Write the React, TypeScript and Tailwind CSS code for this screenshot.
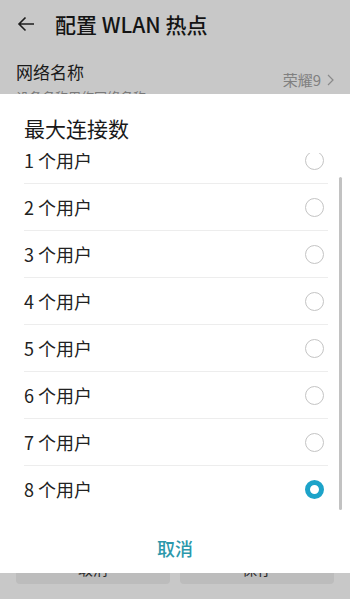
import React from 'react';

const OPTIONS = [1, 2, 3, 4, 5, 6, 7, 8];
const SELECTED = 8;

const Radio: React.FC<{ checked: boolean }> = ({ checked }) =>
  checked ? (
    <span className="w-[19px] h-[19px] rounded-full border-[5px] border-[#1ca3c9] box-border" />
  ) : (
    <span className="w-[19px] h-[19px] rounded-full border border-[#c4c4c4] box-border" />
  );

export default function App() {
  return (
    <div
      className="relative w-[350px] h-[599px] overflow-hidden bg-[#c8c8c8] flex flex-col"
      style={{ fontFamily: '"Noto Sans CJK SC", "Noto Sans", sans-serif' }}
    >
      {/* Background page (dimmed) */}
      <div className="flex items-center h-[48px] pl-[16px]">
        <svg width="20" height="20" viewBox="0 0 20 20" className="text-[#1c1c1c]">
          <path d="M18 10H3M9.5 3.5L3 10l6.5 6.5" fill="none" stroke="currentColor" strokeWidth="1.6" />
        </svg>
        <span className="ml-[19px] text-[21px] font-medium text-[#141414] leading-none">配置 WLAN 热点</span>
      </div>
      <div className="flex items-start justify-between px-[16px] pt-[11px]">
        <div className="flex flex-col">
          <span className="text-[17px] text-[#1a1a1a] leading-[26px]">网络名称</span>
          <span className="text-[13px] text-[#7a7a7a] leading-[18px] mt-[3px]">设备名称用作网络名称</span>
        </div>
        <div className="flex items-center gap-[6px] mt-[11px] text-[15px] text-[#808080] leading-[20px]">
          <span>荣耀9</span>
          <svg width="7" height="12" viewBox="0 0 7 12">
            <path d="M1 1l5 5-5 5" fill="none" stroke="#8a8a8a" strokeWidth="1.2" />
          </svg>
        </div>
      </div>
      <div className="mt-auto mb-[15px] flex gap-[10px] px-[16px]">
        <div className="flex-1 h-[30px] rounded-[4px] bg-[#bcbcbc] flex items-center justify-center text-[15px] text-[#2a2a2a]">取消</div>
        <div className="flex-1 h-[30px] rounded-[4px] bg-[#bcbcbc] flex items-center justify-center text-[15px] text-[#2a2a2a]">保存</div>
      </div>

      {/* Dialog */}
      <div className="absolute left-0 right-0 top-[94px] h-[479px] bg-white flex flex-col">
        <div className="pt-[20px] px-[24px] text-[21px] leading-[28px] text-[#191919]">最大连接数</div>
        <div className="relative mt-[11px] h-[360px] overflow-hidden">
          <div className="-mt-[16px]">
            {OPTIONS.map((n) => (
              <div key={n} className="ml-[24px] mr-[22px] h-[47px] flex items-center justify-between border-b border-[#ededed] last:border-b-0">
                <span className="text-[18px] text-[#222]">{n} 个用户</span>
                <span className="mr-[4px] flex">
                  <Radio checked={n === SELECTED} />
                </span>
              </div>
            ))}
          </div>
          <div className="absolute left-[339px] top-[24px] bottom-[3px] w-[3px] rounded-full bg-[#c2c2c2]" />
        </div>
        <div className="mt-[10px] h-[50px] flex items-center justify-center text-[18px] font-medium text-[#2b98ab]">取消</div>
      </div>
    </div>
  );
}
